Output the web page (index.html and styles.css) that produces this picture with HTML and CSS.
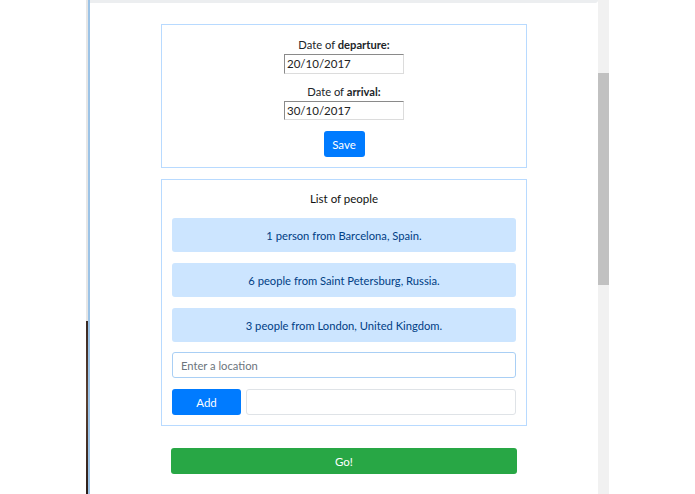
FILE: index.html
```html
<!DOCTYPE html>
<html>
<head>
<meta charset="utf-8">
<link rel="stylesheet" href="styles.css">
</head>
<body>
<div class="screen">
  <div class="gutter"></div>
  <div class="edge"></div>
  <main class="page">
    <div class="topband"></div>
    <section class="card dates">
      <label class="field-label">Date of <b>departure:</b></label>
      <input class="date-input" type="text" value="20/10/2017">
      <label class="field-label second">Date of <b>arrival:</b></label>
      <input class="date-input" type="text" value="30/10/2017">
      <button class="btn btn-primary save">Save</button>
    </section>
    <section class="card people">
      <h3 class="card-title">List of people</h3>
      <div class="item">1 person from Barcelona, Spain.</div>
      <div class="item">6 people from Saint Petersburg, Russia.</div>
      <div class="item">3 people from London, United Kingdom.</div>
      <input class="location" type="text" placeholder="Enter a location">
      <div class="add-row">
        <button class="btn btn-primary add">Add</button>
        <input class="count" type="text">
      </div>
    </section>
    <button class="btn btn-success go">Go!</button>
  </main>
  <div class="scrollbar"><div class="thumb"></div></div>
  <div class="rest"></div>
</div>
</body>
</html>
```

FILE: styles.css
```css
* { box-sizing: border-box; }
html, body { margin: 0; padding: 0; background: #fff; }
body { font-family: Lato, "Open Sans", sans-serif; font-size: 11.2px; color: #212529; }
.screen { display: flex; height: 494px; overflow: hidden; }
.gutter { width: 86px; flex: none; }
.edge {
  width: 4px; flex: none;
  background: linear-gradient(to bottom, #e6e6e6 0, #e6e6e6 321px, #3a2a24 321px, #5a4032 400px, #2b1e1a 494px);
  border-right: 2px solid #9cc3e6;
}
.page { width: 508px; flex: none; display: flex; flex-direction: column; align-items: center; }
.topband { align-self: stretch; height: 3px; background: #eceef0; border-bottom-right-radius: 3px; margin-bottom: 21px; }
.card { width: 366px; border: 1px solid #b8daff; background: #fff; padding: 10px; }
.dates { display: flex; flex-direction: column; align-items: center; padding-top: 11px; padding-bottom: 10px; height: 144px; }
.field-label { line-height: 17px; font-size: 11.2px; color: #212529; }
.field-label b { font-weight: 700; }
.field-label.second { margin-top: 9px; }
.date-input {
  width: 120px; height: 20px; font: inherit; font-size: 11.5px; color: #222;
  border: 1px solid; border-color: #8a8a8a #dcdcdc #dcdcdc #8a8a8a; padding: 0 2px; margin-top: 1px;
}
.btn { border: 0; border-radius: 3px; font: inherit; font-size: 11.5px; color: #fff; cursor: pointer; }
.btn-primary { background: #007bff; }
.btn-success { background: #28a745; }
.save { margin-top: 11px; width: 41px; height: 26px; }
.people { margin-top: 11px; height: 247px; display: flex; flex-direction: column; gap: 11px; }
.card-title { margin: 0; font-size: 11.5px; font-weight: 400; color: #111; text-align: center; line-height: 18px; margin-bottom: -1px; }
.item { height: 34px; flex: none; background: #cce5ff; color: #004085; border-radius: 3px; display: flex; align-items: center; justify-content: center; }
.location {
  height: 26px; flex: none; margin-top: -1px; border: 1px solid #a9cff5; border-radius: 3px; font: inherit; padding: 0 8px; color: #495057;
}
.location::placeholder { color: #6c757d; }
.add-row { display: flex; gap: 5px; height: 26px; flex: none; }
.add { width: 69px; height: 26px; }
.count { flex: 1; border: 1px solid #dfe3e7; border-radius: 3px; height: 26px; }
.go { margin-top: 22px; width: 346px; height: 26px; }
.scrollbar { width: 11px; flex: none; background: #f1f1f1; }
.thumb { margin-top: 73px; height: 212px; background: #c1c1c1; }
.rest { flex: 1; }
```
